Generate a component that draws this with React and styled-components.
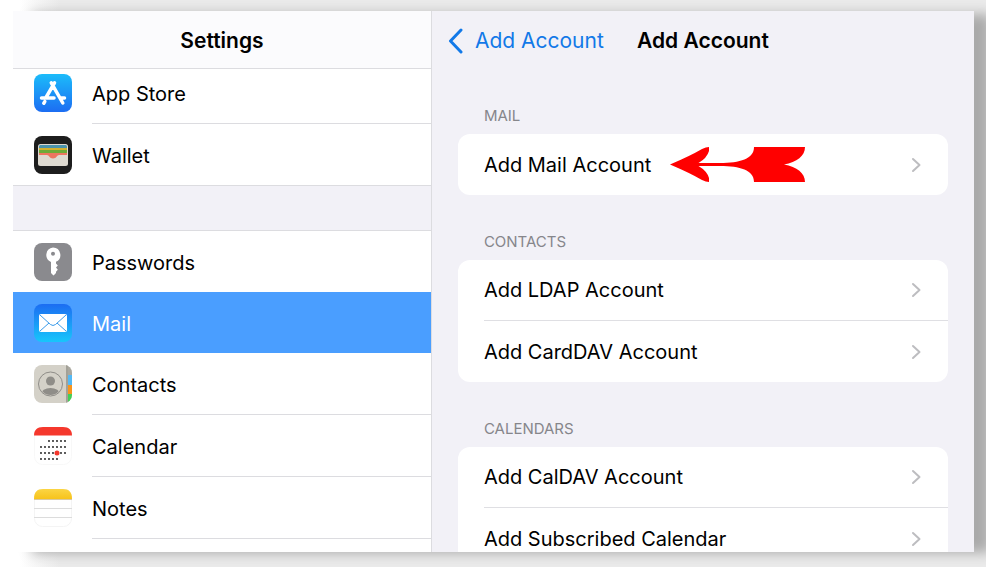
import React, { useState } from "react";
import styled, { createGlobalStyle } from "styled-components";

const sidebarGroups = [
  [
    { name: "App Store", Icon: AppStoreIcon, line: true },
    { name: "Wallet", Icon: WalletIcon },
  ],
  [
    { name: "Passwords", Icon: PasswordsIcon },
    { name: "Mail", Icon: MailIcon },
    { name: "Contacts", Icon: ContactsIcon, line: true },
    { name: "Calendar", Icon: CalendarIcon, line: true },
    { name: "Notes", Icon: NotesIcon, line: true },
  ],
];

const accountSections = [
  { title: "Mail", rows: ["Add Mail Account"] },
  { title: "Contacts", rows: ["Add LDAP Account", "Add CardDAV Account"] },
  { title: "Calendars", rows: ["Add CalDAV Account", "Add Subscribed Calendar"] },
];

function App() {
  const [selected, setSelected] = useState("Mail");

  return (
    <StPage>
      <GlobalStyle />
      <StWindow>
        <StSidebar>
          <StSidebarHeader>
            <StTitle>Settings</StTitle>
          </StSidebarHeader>
          <StNav aria-label="Settings">
            {sidebarGroups.map((group) => (
              <StNavGroup key={group[0].name}>
                {group.map(({ name, Icon, line }) => (
                  <li key={name}>
                    <StNavItem
                      type="button"
                      $active={selected === name}
                      aria-current={selected === name ? "page" : undefined}
                      onClick={() => setSelected(name)}
                    >
                      <Icon />
                      <StNavLabel $line={line}>{name}</StNavLabel>
                    </StNavItem>
                  </li>
                ))}
              </StNavGroup>
            ))}
          </StNav>
        </StSidebar>

        <StMain>
          <StMainHeader>
            <StBack href="#accounts">
              <svg width="15" height="26" viewBox="0 0 15 26" fill="none" aria-hidden="true">
                <path d="M13 2 2.5 13 13 24" stroke="currentColor" strokeWidth="3" strokeLinecap="round" strokeLinejoin="round" />
              </svg>
              Add Account
            </StBack>
            <StTitle>Add Account</StTitle>
          </StMainHeader>

          {accountSections.map((section) => (
            <section key={section.title}>
              <StSectionTitle>{section.title}</StSectionTitle>
              <StCard>
                {section.rows.map((row) => (
                  <StCardItem key={row}>
                    <StRowButton type="button">
                      {row}
                      {row === "Add Mail Account" && <PointerArrow />}
                      <StChevron width="10" height="16" viewBox="0 0 10 16" aria-hidden="true">
                        <path d="m2 2 6.500 6L2 14" />
                      </StChevron>
                    </StRowButton>
                  </StCardItem>
                ))}
              </StCard>
            </section>
          ))}
        </StMain>
      </StWindow>
    </StPage>
  );
}

export default App;

function PointerArrow() {
  return (
    <svg width="135" height="35" viewBox="0 0 135 35" aria-hidden="true">
      <path
        fill="#ff0000"
        d="M0 17.500 Q20 9 32 2 Q36 0 39 0 V4 Q37 11 28.500 16 H50 C70 16 84 12 84 0 H135 C135 9 127 15 114 17.500 C127 20 135 26 135 35 H84 C84 23 70 19 50 19 H28.500 Q37 24 39 31 V35 Q36 35 32 33 Q20 26 0 17.500Z"
      />
    </svg>
  );
}

function AppStoreIcon() {
  return (
    <StIcon viewBox="0 0 38 38" aria-hidden="true">
      <defs>
        <linearGradient id="storeBlue" x1="0" y1="0" x2="0" y2="1">
          <stop offset="0" stopColor="#1cbcfa" />
          <stop offset="1" stopColor="#1c6df2" />
        </linearGradient>
      </defs>
      <rect width="38" height="38" rx="8" fill="url(#storeBlue)" />
      <g stroke="#fff" strokeWidth="3.500" strokeLinecap="round" fill="none">
        <path d="M20.500 8.800 12 23.500M17.300 8.800 28.800 29M7.500 24H20M26.500 24H30.500M10.800 27.600 9.800 29.200" />
      </g>
    </StIcon>
  );
}

function WalletIcon() {
  return (
    <StIcon viewBox="0 0 38 38" aria-hidden="true">
      <rect width="38" height="38" rx="8" fill="#1d1d1d" />
      <rect x="4" y="8" width="30" height="22" rx="2.500" fill="#dedad1" />
      <path d="M5 11c0-1.500.5-2 2-2h24c1.500 0 2 .5 2 2v1H5z" fill="#4c94ac" />
      <path d="M5 12h28v2.500H5z" fill="#d3b12e" />
      <path d="M5 14h28v3H5z" fill="#6eaa37" />
      <path d="M5 17h28v2h-8c-2 0-2.500 3.500-6 3.500S15 19 13 19H5z" fill="#ed755f" />
    </StIcon>
  );
}

function PasswordsIcon() {
  return (
    <StIcon viewBox="0 0 38 38" aria-hidden="true">
      <rect width="38" height="38" rx="8" fill="#8a8a8e" />
      <path
        fill="#fff"
        fillRule="evenodd"
        d="M19 4.500a7.500 7.500 0 0 1 3 14.300v1.700l1.800 2-1.800 2 1.800 2.200-1.800 2v1.300L19.500 32.500 17 30V18.900A7.500 7.500 0 0 1 19 4.500zM19 8.700a2 2 0 1 0 0 4 2 2 0 0 0 0-4z"
      />
    </StIcon>
  );
}

function MailIcon() {
  return (
    <StIcon viewBox="0 0 38 38" aria-hidden="true">
      <defs>
        <linearGradient id="mailBlue" x1="0" y1="0" x2="0" y2="1">
          <stop offset="0" stopColor="#1c6df2" />
          <stop offset="1" stopColor="#18c6fb" />
        </linearGradient>
      </defs>
      <rect width="38" height="38" rx="8" fill="url(#mailBlue)" />
      <rect x="5" y="10" width="28" height="18" rx="2" fill="#fff" />
      <path d="m6 11 10.500 9.500q2.500 2 5 0L32 11M6 27l9-8M32 27l-9-8" stroke="#3a9bea" fill="none" />
    </StIcon>
  );
}

function ContactsIcon() {
  return (
    <StIcon viewBox="0 0 38 38" aria-hidden="true">
      <defs>
        <clipPath id="contactsShape">
          <rect width="38" height="38" rx="8" />
        </clipPath>
        <clipPath id="contactsFace">
          <circle cx="16.500" cy="19" r="11" />
        </clipPath>
      </defs>
      <g clipPath="url(#contactsShape)">
        <rect width="38" height="38" fill="#d4d1c8" />
        <rect x="32" width="6" height="10" fill="#aaa89f" />
        <rect x="34" y="10" width="4" height="10" fill="#54b9f5" />
        <rect x="34" y="20" width="4" height="9" fill="#f7941d" />
        <rect x="34" y="29" width="4" height="9" fill="#43cf55" />
        <rect x="32" width="2" height="38" fill="#a3a198" />
      </g>
      <g clipPath="url(#contactsFace)" fill="#8f8d88">
        <circle cx="16.500" cy="16" r="4.500" />
        <ellipse cx="16.500" cy="29" rx="9.500" ry="6" />
      </g>
      <circle cx="16.500" cy="19" r="12" fill="none" stroke="#8f8d88" />
    </StIcon>
  );
}

// first and last visible column of each week
const calendarWeeks = [
  [2, 6],
  [0, 6],
  [0, 6],
  [0, 4],
];

function CalendarIcon() {
  return (
    <StIcon viewBox="0 0 38 38" aria-hidden="true">
      <rect x="0.500" y="0.500" width="37" height="37" rx="8" fill="#fff" stroke="#f8f8f8" />
      <path d="M0 8.500C0 3 3 0 9 0h20c6 0 9 3 9 8.500z" fill="#f5382d" />
      {calendarWeeks.map(([from, to], week) =>
        Array.from({ length: to - from + 1 }, (_, i) => (
          <circle key={`${week}-${i}`} cx={7 + (from + i) * 4} cy={14 + week * 6} r="0.900" fill="#111" />
        ))
      )}
      <circle cx="23" cy="26" r="2.500" fill="#f5382d" />
    </StIcon>
  );
}

function NotesIcon() {
  return (
    <StIcon viewBox="0 0 38 38" aria-hidden="true">
      <defs>
        <linearGradient id="notesYellow" x1="0" y1="0" x2="0" y2="1">
          <stop offset="0" stopColor="#fbd544" />
          <stop offset="1" stopColor="#f7c31b" />
        </linearGradient>
      </defs>
      <rect x="0.500" y="0.500" width="37" height="37" rx="8" fill="#fff" stroke="#f4f4f4" />
      <path d="M0 10C0 3 3 0 9 0h20c6 0 9 3 9 10z" fill="url(#notesYellow)" />
      <path d="M0 10.500h38" stroke="#d9c9a0" />
      <path d="M0 19.500h38M0 28.500h38" stroke="#dcdcdc" />
    </StIcon>
  );
}

const GlobalStyle = createGlobalStyle`
  * {
    box-sizing: border-box;
  }
  body {
    margin: 0;
    background: #fff;
    color: #000;
    font-family: Inter, "Liberation Sans", sans-serif;
    font-size: 20px;
    line-height: 26px;
  }
  ul {
    list-style: none;
    margin: 0;
    padding: 0;
  }
  button {
    border: none;
    background: none;
    color: inherit;
    font: inherit;
    text-align: left;
    cursor: pointer;
  }
`;

const StPage = styled.div`
  display: flex;
  height: 100vh;
  padding: 11px 12px 15px 13px;
  background: linear-gradient(to right, #fff 20px, #ebebeb 60px);
  overflow: hidden;
`;

const StWindow = styled.div`
  flex: 1;
  display: grid;
  grid-template-columns: minmax(0, 17fr) minmax(0, 22fr);
  overflow: hidden;
  box-shadow: 18px 2px 12px -1px #aaa;
`;

const StSidebar = styled.aside`
  background: #fff;
  border-right: 1px solid #dcdce0;
  overflow: hidden;
`;

const StSidebarHeader = styled.header`
  /* stays above the list that is scrolled under it */
  position: relative;
  z-index: 1;
  display: flex;
  align-items: center;
  justify-content: center;
  height: 58px;
  padding-top: 2px;
  background: #fbfbfd;
  border-bottom: 1px solid #dcdce0;
`;

const StTitle = styled.h1`
  margin: 0;
  font-size: 21px;
  font-weight: 600;
`;

const StNav = styled.nav`
  display: flex;
  flex-direction: column;
  gap: 46px;
  margin-top: -7px;
  background: #f2f1f7;
`;

const StNavGroup = styled.ul`
  background: #fff;
  box-shadow: 0 0 0 1px #dcdce0;

  &:last-child {
    padding-bottom: 20px;
  }
`;

const StNavItem = styled.button`
  display: flex;
  align-items: center;
  gap: 20px;
  width: 100%;
  padding: 0 0 0 21px;
  background: ${(props) => (props.$active ? "#4a9eff" : "transparent")};
  color: ${(props) => (props.$active ? "#fff" : "#000")};
`;

const StNavLabel = styled.span`
  flex: 1;
  display: flex;
  align-items: center;
  height: ${(props) => (props.$line ? "62px" : "61px")};
  padding-top: 2px;
  border-bottom: ${(props) => (props.$line ? "1px solid #dcdce0" : "none")};
`;

const StIcon = styled.svg`
  flex: none;
  width: 38px;
  height: 38px;
`;

const StMain = styled.main`
  padding: 0 26px;
  background: #f2f1f7;
  overflow: hidden;
`;

const StMainHeader = styled.header`
  display: grid;
  grid-template-columns: 1fr auto 1fr;
  align-items: center;
  height: 58px;
  padding-top: 2px;
`;

const StBack = styled.a`
  display: flex;
  align-items: center;
  gap: 12px;
  margin-left: -10px;
  color: #1279e8;
  font-size: 21px;
  text-decoration: none;
  white-space: nowrap;
`;

const StSectionTitle = styled.h2`
  display: flex;
  align-items: flex-end;
  height: 65px;
  margin: 0;
  padding: 0 26px 8px;
  color: #86868b;
  font-size: 15px;
  font-weight: 400;
  line-height: 20px;
  text-transform: uppercase;
`;

const StCard = styled.ul`
  background: #fff;
  border-radius: 12px;
`;

const StCardItem = styled.li`
  padding-left: 26px;
`;

const StRowButton = styled.button`
  display: flex;
  align-items: center;
  gap: 19px;
  width: 100%;
  height: 61px;
  padding: 0 27px 0 0;
  white-space: nowrap;

  ${StCardItem}:not(:last-child) & {
    border-bottom: 1px solid #dfdfe3;
  }
`;

const StChevron = styled.svg`
  flex: none;
  margin-left: auto;
  fill: none;
  stroke: #bdbdc0;
  stroke-width: 2;
  stroke-linecap: round;
  stroke-linejoin: round;
`;
